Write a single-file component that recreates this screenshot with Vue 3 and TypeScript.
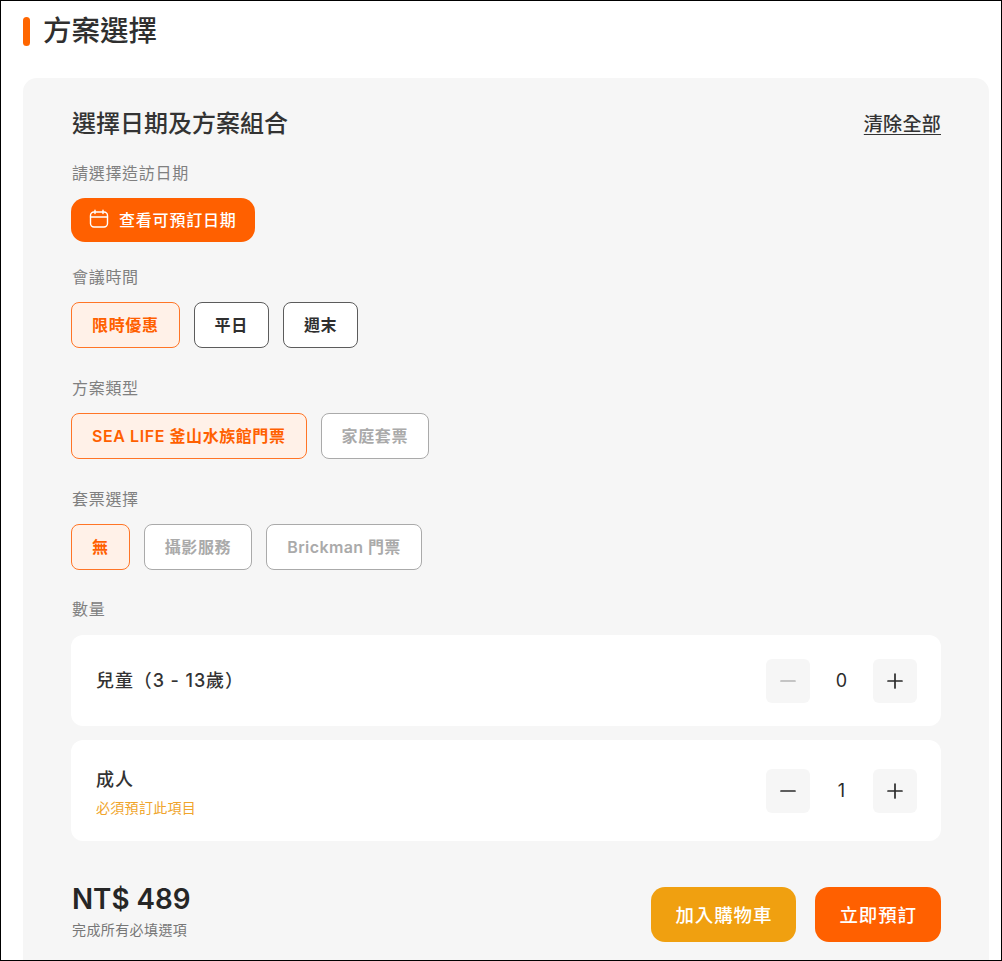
<script setup lang="ts">
interface Chip { label: string; state: 'active' | 'normal' | 'disabled'; cls?: string }
interface Group { title: string; chips: Chip[] }
const groups: Group[] = [
  { title: '會議時間', chips: [
    { label: '限時優惠', state: 'active' },
    { label: '平日', state: 'normal' },
    { label: '週末', state: 'normal' },
  ] },
  { title: '方案類型', chips: [
    { label: 'SEA LIFE 釜山水族館門票', state: 'active', cls: 'sea' },
    { label: '家庭套票', state: 'disabled' },
  ] },
  { title: '套票選擇', chips: [
    { label: '無', state: 'active' },
    { label: '攝影服務', state: 'disabled' },
    { label: 'Brickman 門票', state: 'disabled', cls: 'brick' },
  ] },
]
</script>

<template>
  <div class="page">
    <h2 class="title"><span class="bar"></span>方案選擇</h2>
    <section class="panel">
      <div class="head">
        <h3>選擇日期及方案組合</h3>
        <a class="clear">清除全部</a>
      </div>
      <div class="label first">請選擇造訪日期</div>
      <button class="date-btn">
        <svg width="20" height="20" viewBox="0 0 20 20" fill="none" stroke="#fff" stroke-width="1.4" stroke-linecap="round">
          <rect x="1.5" y="3" width="17" height="15" rx="3.5" />
          <path d="M1.5 8h17M6 1.2v3.4M14 1.2v3.4" />
        </svg>
        查看可預訂日期
      </button>
      <div v-for="g in groups" :key="g.title" class="group">
        <div class="label">{{ g.title }}</div>
        <div class="chips">
          <span v-for="c in g.chips" :key="c.label" class="chip" :class="[c.state, c.cls]">{{ c.label }}</span>
        </div>
      </div>
      <div class="label qty">數量</div>
      <div class="row child">
        <div class="name">兒童（3 - 13歲）</div>
        <div class="stepper">
          <span class="step">
            <svg width="18" height="18" viewBox="0 0 18 18" stroke="#b4b4b4" stroke-width="1.7" stroke-linecap="round"><path d="M2 9h14" /></svg>
          </span>
          <span class="val">0</span>
          <span class="step">
            <svg width="18" height="18" viewBox="0 0 18 18" stroke="#2b2b2b" stroke-width="1.7" stroke-linecap="round"><path d="M2 9h14M9 2v14" /></svg>
          </span>
        </div>
      </div>
      <div class="row adult">
        <div class="adult-text">
          <div class="name">成人</div>
          <div class="req">必須預訂此項目</div>
        </div>
        <div class="stepper">
          <span class="step">
            <svg width="18" height="18" viewBox="0 0 18 18" stroke="#2b2b2b" stroke-width="1.7" stroke-linecap="round"><path d="M2 9h14" /></svg>
          </span>
          <span class="val">1</span>
          <span class="step">
            <svg width="18" height="18" viewBox="0 0 18 18" stroke="#2b2b2b" stroke-width="1.7" stroke-linecap="round"><path d="M2 9h14M9 2v14" /></svg>
          </span>
        </div>
      </div>
      <div class="foot">
        <div>
          <div class="price">NT$ 489</div>
          <div class="hint">完成所有必填選項</div>
        </div>
        <div class="actions">
          <button class="cta cart">加入購物車</button>
          <button class="cta book">立即預訂</button>
        </div>
      </div>
    </section>
  </div>
</template>

<style scoped>
.page {
  box-sizing: border-box;
  width: 1002px;
  height: 961px;
  border: 1px solid #000;
  overflow: hidden;
  background: #fff;
  padding: 15px 12px 0 22px;
  font-family: Inter, "Noto Sans CJK TC", sans-serif;
  color: #333;
}
.title {
  display: flex;
  align-items: center;
  gap: 13px;
  margin: 0;
  height: 30px;
  font-size: 28.5px;
  line-height: 30px;
  font-weight: 500;
  color: #2f2f2f;
}
.bar {
  width: 7px;
  height: 29px;
  border-radius: 4px;
  background: #ff6600;
}
.panel {
  margin-top: 32px;
  background: #f6f6f6;
  border-radius: 14px;
  padding: 29px 48px 40px 48px;
}
.head {
  display: flex;
  justify-content: space-between;
  align-items: center;
  height: 34px;
}
.head h3 {
  margin: 0 0 0 1px;
  font-size: 24px;
  line-height: 34px;
  font-weight: 500;
  color: #333;
}
.clear {
  margin-bottom: 4px;
  font-size: 19px;
  font-weight: 500;
  letter-spacing: 0.3px;
  color: #333;
  text-decoration: underline;
  text-underline-offset: 3px;
}
.label {
  font-size: 16px;
  line-height: 24px;
  letter-spacing: 0.7px;
  color: #808080;
  padding-left: 1px;
}
.label.first { margin-top: 20px; }
.date-btn {
  display: flex;
  align-items: center;
  gap: 10px;
  margin-top: 13px;
  height: 44px;
  width: 184px;
  padding: 0 0 2px 18px;
  border: 0;
  border-radius: 14px;
  background: #ff6000;
  color: #fff;
  font: inherit;
  font-size: 16px;
  font-weight: 500;
  letter-spacing: 0.8px;
}
.group { margin-top: 28px; }
.date-btn + .group { margin-top: 23px; }
.chips {
  display: flex;
  gap: 14px;
  margin-top: 13px;
}
.chip {
  box-sizing: border-box;
  display: flex;
  align-items: center;
  height: 46px;
  padding: 0 20px 2px;
  border: 1px solid #5c5c5c;
  border-radius: 8px;
  background: #fff;
  font-size: 16px;
  font-weight: 600;
  letter-spacing: 0.65px;
  color: #2f2f2f;
}
.chip.sea { letter-spacing: 0.57px; }
.chip.brick { letter-spacing: 0.4px; }
.chip.active {
  border-color: #ff7526;
  background: #fff1e8;
  color: #ff6000;
}
.chip.disabled {
  border-color: #aaa;
  color: #aaa;
}
.label.qty { margin-top: 27px; }
.row {
  box-sizing: border-box;
  display: flex;
  align-items: center;
  justify-content: space-between;
  background: #fff;
  border-radius: 12px;
  padding: 0 24px 0 25px;
}
.row.child { height: 91px; margin-top: 14px; }
.row.adult { height: 101px; margin-top: 14px; }
.adult-text { padding-top: 4px; }
.name {
  font-size: 18px;
  line-height: 26px;
  font-weight: 500;
  letter-spacing: 0.9px;
  color: #333;
}
.req {
  margin-top: 5px;
  font-size: 14px;
  line-height: 20px;
  letter-spacing: 0.3px;
  color: #f0a52c;
}
.stepper {
  display: flex;
  align-items: center;
}
.step {
  display: flex;
  align-items: center;
  justify-content: center;
  width: 44px;
  height: 44px;
  border-radius: 6px;
  background: #f6f6f6;
}
.val {
  width: 63px;
  text-align: center;
  font-size: 18px;
  color: #2b2b2b;
}
.foot {
  display: flex;
  justify-content: space-between;
  align-items: flex-start;
  margin-top: 46px;
}
.price {
  margin: -5px 0 0 1px;
  font-size: 27.8px;
  line-height: 34px;
  font-weight: 600;
  color: #262626;
}
.hint {
  margin: 4px 0 0 1px;
  font-size: 14px;
  line-height: 20px;
  letter-spacing: 0.4px;
  color: #777;
}
.actions {
  display: flex;
  gap: 19px;
}
.cta {
  height: 55px;
  padding: 0 24px 2px;
  border: 0;
  border-radius: 14px;
  color: #fff;
  font: inherit;
  font-size: 18.5px;
  font-weight: 500;
  letter-spacing: 0.9px;
}
.cart { background: #f0a010; }
.book { background: #ff6000; }
</style>
